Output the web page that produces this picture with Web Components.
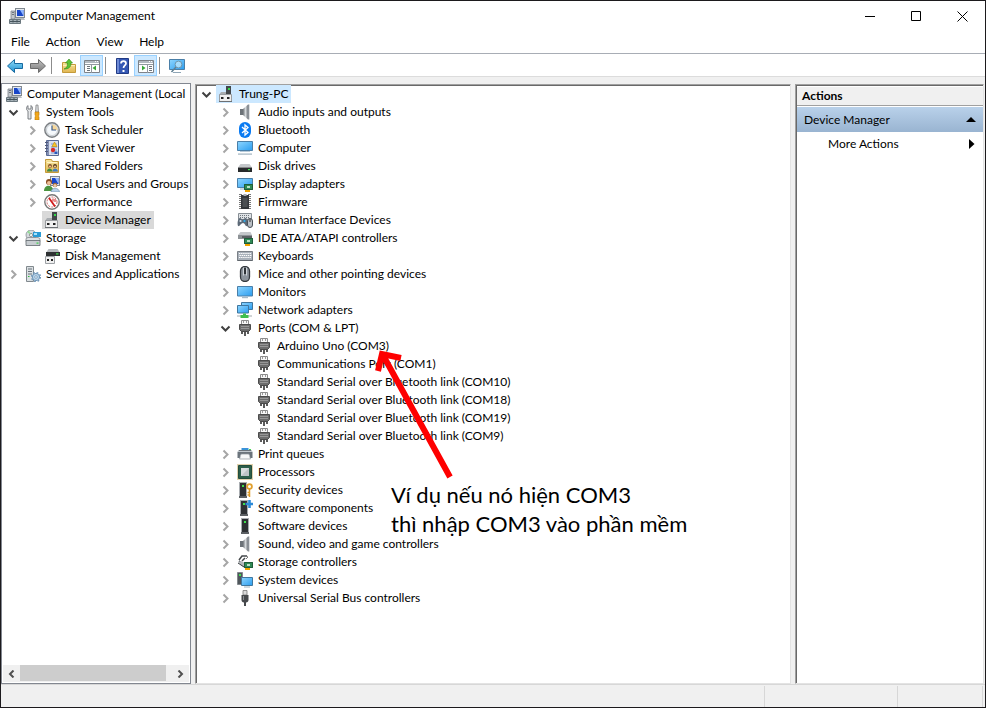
<!DOCTYPE html>
<html lang="en">
<head>
<meta charset="utf-8">
<title>Computer Management</title>
<style>
html, body { margin: 0; height: 100%; }
body { font: 12px/18px Lato, "Open Sans", sans-serif; color: #000; background: #fff; }
</style>
</head>
<body>
<mmc-window>
  <mmc-titlebar slot="top" icon="mgmt">Computer Management</mmc-titlebar>
  <mmc-menubar slot="top" items="File,Action,View,Help"></mmc-menubar>
  <mmc-toolbar slot="top"></mmc-toolbar>

  <mmc-pane slot="left" kind="thin" scrollbar>
    <tree-item icon="mgmt" depth="0">Computer Management (Local</tree-item>
    <tree-item icon="tools" depth="0" state="open">System Tools</tree-item>
    <tree-item icon="clock" depth="1" state="closed">Task Scheduler</tree-item>
    <tree-item icon="event" depth="1" state="closed">Event Viewer</tree-item>
    <tree-item icon="shared" depth="1" state="closed">Shared Folders</tree-item>
    <tree-item icon="users" depth="1" state="closed">Local Users and Groups</tree-item>
    <tree-item icon="perf" depth="1" state="closed">Performance</tree-item>
    <tree-item icon="device" depth="1" state="leaf" selected="grey">Device Manager</tree-item>
    <tree-item icon="storage" depth="0" state="open">Storage</tree-item>
    <tree-item icon="disk" depth="1" state="leaf">Disk Management</tree-item>
    <tree-item icon="services" depth="0" state="closed">Services and Applications</tree-item>
  </mmc-pane>

  <mmc-pane slot="middle" kind="sunken">
    <tree-item icon="device" depth="0" state="open" selected="blue">Trung-PC</tree-item>
    <tree-item icon="speaker" depth="1" state="closed">Audio inputs and outputs</tree-item>
    <tree-item icon="bluetooth" depth="1" state="closed">Bluetooth</tree-item>
    <tree-item icon="computer" depth="1" state="closed">Computer</tree-item>
    <tree-item icon="drive" depth="1" state="closed">Disk drives</tree-item>
    <tree-item icon="display" depth="1" state="closed">Display adapters</tree-item>
    <tree-item icon="firmware" depth="1" state="closed">Firmware</tree-item>
    <tree-item icon="hid" depth="1" state="closed">Human Interface Devices</tree-item>
    <tree-item icon="ide" depth="1" state="closed">IDE ATA/ATAPI controllers</tree-item>
    <tree-item icon="keyboard" depth="1" state="closed">Keyboards</tree-item>
    <tree-item icon="mouse" depth="1" state="closed">Mice and other pointing devices</tree-item>
    <tree-item icon="monitor" depth="1" state="closed">Monitors</tree-item>
    <tree-item icon="network" depth="1" state="closed">Network adapters</tree-item>
    <tree-item icon="port" depth="1" state="open">Ports (COM &amp; LPT)</tree-item>
    <tree-item icon="port" depth="2" state="leaf">Arduino Uno (COM3)</tree-item>
    <tree-item icon="port" depth="2" state="leaf">Communications Port (COM1)</tree-item>
    <tree-item icon="port" depth="2" state="leaf">Standard Serial over Bluetooth link (COM10)</tree-item>
    <tree-item icon="port" depth="2" state="leaf">Standard Serial over Bluetooth link (COM18)</tree-item>
    <tree-item icon="port" depth="2" state="leaf">Standard Serial over Bluetooth link (COM19)</tree-item>
    <tree-item icon="port" depth="2" state="leaf">Standard Serial over Bluetooth link (COM9)</tree-item>
    <tree-item icon="printer" depth="1" state="closed">Print queues</tree-item>
    <tree-item icon="cpu" depth="1" state="closed">Processors</tree-item>
    <tree-item icon="security" depth="1" state="closed">Security devices</tree-item>
    <tree-item icon="softcomp" depth="1" state="closed">Software components</tree-item>
    <tree-item icon="softdev" depth="1" state="closed">Software devices</tree-item>
    <tree-item icon="speaker" depth="1" state="closed">Sound, video and game controllers</tree-item>
    <tree-item icon="storctl" depth="1" state="closed">Storage controllers</tree-item>
    <tree-item icon="system" depth="1" state="closed">System devices</tree-item>
    <tree-item icon="usb" depth="1" state="closed">Universal Serial Bus controllers</tree-item>
    <arrow-note slot="overlay" lang="vi"><div>Ví dụ nếu nó hiện COM3</div><div>thì nhập COM3 vào phần mềm</div></arrow-note>
  </mmc-pane>

  <mmc-actions slot="right">
    <span slot="title">Actions</span>
    <span slot="group">Device Manager</span>
    <span slot="item">More Actions</span>
  </mmc-actions>

  <mmc-statusbar slot="bottom"></mmc-statusbar>
</mmc-window>

<script>
const defs = `<defs>
<linearGradient id="scr" x1="0" y1="0" x2="1" y2="1"><stop offset="0" stop-color="#8fd6ff"/><stop offset="1" stop-color="#2a9df0"/></linearGradient>
<linearGradient id="met" x1="0" y1="0" x2="1" y2="0"><stop offset="0" stop-color="#6d7277"/><stop offset=".5" stop-color="#d4d8db"/><stop offset="1" stop-color="#777c82"/></linearGradient>
<linearGradient id="fold" x1="0" y1="0" x2="0" y2="1"><stop offset="0" stop-color="#f7e6a0"/><stop offset="1" stop-color="#e0b550"/></linearGradient>
<linearGradient id="blu" x1="0" y1="0" x2="0" y2="1"><stop offset="0" stop-color="#8fdcf8"/><stop offset="1" stop-color="#1e8fd0"/></linearGradient>
<linearGradient id="gry" x1="0" y1="0" x2="0" y2="1"><stop offset="0" stop-color="#c4c4c4"/><stop offset="1" stop-color="#777"/></linearGradient>
</defs>`;
const board = `<path d="M7 8h9v6H7z" fill="#2f8a55"/><path d="M7.500 8.500h8v5h-8z" fill="none" stroke="#1f5c3a"/><path d="M10 10h3v2h-3z" fill="#b9e3c6"/><path d="M8 14h5v2H8z" fill="#f0a400"/>`;
const tower = `<path d="M4 0h8v15H4z" fill="#a9adb1"/><path d="M5 1h6v13H5z" fill="#2e3134"/><path d="M7 3h2v2H7z" fill="#3fe04c"/><path d="M4 14h8v2H4z" fill="#5c6064"/>`;
const pcb = `<rect x="6.500" y=".5" width="9" height="9" fill="#e5e8ec" stroke="#808890"/><path d="M8 2h6.500v6H8z" fill="#1846c8"/><path d="M11 2h3.500v6z" fill="#8fb6ff"/>`;
const ICONS = {
mgmt: pcb + `<path d="M2 3h4v8H2z" fill="#c2c7cc" stroke="#7c8288" stroke-width=".8"/><path d="M3 4.500h2M3 6.500h2" stroke="#59616a" stroke-width=".8"/><path d="M6 10h9l1 2H6z" fill="#b8bdc2"/><path d="M.5 11.500h11v4H.5z" fill="#a9b4ba" stroke="#6a777e"/><path d="M1 13.500h10M4 12v2.500M8 12v2.500" stroke="#46545d"/>`,
tools: `<path d="M3 1.500C1 3 1 6 3 7v8h3V7c2-1 2-4 0-5.500v3.500H3z" fill="#e6e8ea" stroke="#707478" stroke-width=".9"/><path d="M11 1h2l.5 7h-3z" fill="#d5d8db" stroke="#7c7c7c" stroke-width=".7"/><path d="M10 8h4v3l-.6 1 .6 1v3h-4v-3l.6-1-.6-1z" fill="#f3a81c" stroke="#b97508" stroke-width=".6"/>`,
clock: `<circle cx="8" cy="8" r="7.200" fill="#dfe4e7" stroke="#7b7f83" stroke-width="1.400"/><circle cx="8" cy="8" r="5.500" fill="#f5f9fc" stroke="#b5bbc0" stroke-width=".6"/><path d="M8 8V2.500A5.500 5.500 0 0 1 13.500 8z" fill="#f6d79a"/><path d="M8 3.500V8h4" fill="none" stroke="#3c5c8c" stroke-width="1.200"/>`,
event: `<path d="M2.500.5h12v15h-12z" fill="#d9dfee" stroke="#5a6b95"/><path d="M3 1h2v14H3z" fill="#8490b4"/><path d="M1 2.500h3M1 5.500h3M1 8.500h3M1 11.500h3" stroke="#50597a"/><path d="M7 4h6M7 7h6M7 10h6M7 13h6" stroke="#7b9bd6"/><path d="M10.500 2l2.500 4.500H8z" fill="#f8c62a" stroke="#c08a00" stroke-width=".6"/><circle cx="9" cy="10" r="2.200" fill="#d62a2a"/><path d="M10.500 11.500h3V14h-3z" fill="#2a58b8"/>`,
shared: `<path d="M1.500 3.500v-2h6l1 2h6v11h-13z" fill="url(#fold)" stroke="#c49a3a"/><path d="M3 4.500h10" stroke="#fff5c8"/><circle cx="6" cy="8" r="1.900" fill="#7b4a22"/><circle cx="11" cy="8" r="1.900" fill="#4e3318"/><path d="M3 13.500c0-4 5-4 5.500 0z" fill="#3f8a42"/><path d="M8.500 13.500c0-4 5-4 5.500 0z" fill="#3f7fc2"/><circle cx="6" cy="8.600" r="1.100" fill="#eebf94"/><circle cx="11" cy="8.600" r="1.100" fill="#eebf94"/>`,
users: pcb + `<circle cx="5" cy="6" r="3" fill="#8a4c22"/><circle cx="5" cy="7" r="2" fill="#efc09a"/><path d="M0 15c0-7 9-7 9.500 0z" fill="#4c9440"/><circle cx="11" cy="9" r="2.300" fill="#9a6a40"/><circle cx="11" cy="9.500" r="1.600" fill="#efc9a8"/><path d="M7 16c0-5 8-5 8.500 0z" fill="#b5d0e8" stroke="#6b8ba5" stroke-width=".6"/>`,
perf: `<circle cx="8" cy="8" r="7.200" fill="#fff" stroke="#777" stroke-width="1.400"/><circle cx="8" cy="8" r="5" fill="#fff" stroke="#c66" stroke-width="1" stroke-dasharray="2 1.200"/><path d="M5 4l6 8.500" stroke="#d01c1c" stroke-width="1.800"/><path d="M9 4.500v3M11 5v3" stroke="#d01c1c"/>`,
device: `<path d="M8 0h5v9H8z" fill="#43474a"/><path d="M10 2h2v2h-2z" fill="#35d94b"/><path d="M3 6h5v2h5v1H1z" fill="#a9adb1"/><path d="M1.500 8.500h12v7h-12z" fill="#f0f0f0" stroke="#9a9da0"/><path d="M1 15.500h13" stroke="#6c7074"/><path d="M3 11h2.500v2H3zM9 11h2.500v2H9z" fill="#222"/>`,
storage: `<circle cx="6" cy="5" r="5" fill="#d5dade" stroke="#888e94" stroke-width=".8"/><circle cx="6" cy="5" r="1.600" fill="#fff" stroke="#777" stroke-width=".7"/><path d="M6 5L2 2l2-1.500z" fill="#8fdc92"/><path d="M8 2h8v5H8z" fill="#2b9bd4"/><path d="M9 3h3v2H9z" fill="#a7e1fb"/><path d="M1 8.500l2-1h10l2 1v3H1z" fill="#dfe2e4" stroke="#777d82" stroke-width=".7"/><path d="M1 10.500h14v5H1z" fill="#c8cdd1" stroke="#60676c" stroke-width=".8"/><path d="M11.500 12.500h2v1.200h-2z" fill="#3bd14a"/>`,
disk: `<path d="M2.500 4l2-3h9l2 3z" fill="#b6babe"/><path d="M2 4h14v4H2z" fill="#2e3133"/><path d="M12 5.300h2.500v1.200H12z" fill="#44e052"/><path d="M1.500 8.500h9v7h-9z" fill="#f0f0f0" stroke="#9da1a5"/><path d="M3 11h2v2H3zM7 11h2v2H7z" fill="#222"/>`,
services: `<path d="M1.500.5h7v15h-7z" fill="#dbe0e3" stroke="#81898e"/><path d="M3 3h4M3 5.500h4M3 8h4" stroke="#69737b"/><path d="M3 10.500h1.500" stroke="#2bb83b"/><circle cx="11" cy="11" r="3.600" fill="#b8d4ea" stroke="#6f95b7"/><circle cx="11" cy="11" r="4.500" fill="none" stroke="#6f95b7" stroke-width="1.300" stroke-dasharray="1.700 1.840"/><circle cx="11" cy="11" r="1.300" fill="#fff" stroke="#6f95b7" stroke-width=".8"/>`,
speaker: `<path d="M3 5h3v6H3z" fill="#6c7278"/><path d="M6 5l5-4.500v15L6 11z" fill="url(#met)"/><path d="M11 .5h1.300v15H11z" fill="#8a9097"/>`,
bluetooth: `<rect x="2" y="0" width="12" height="16" rx="6" fill="#0a7bf2"/><path d="M5 5l6 5.500L8 13V3l3 2.500L5 11" fill="none" stroke="#fff" stroke-width="1.300"/>`,
computer: `<path d="M.5 1.500h15v9H.5z" fill="url(#scr)" stroke="#4a7fa8"/><path d="M3 11h10v1H3z" fill="#b7cad8"/><path d="M1 13.500h14v1.200H1z" fill="#9fb2bf"/>`,
drive: `<path d="M3.500 6h9L15 9.500H1z" fill="#c4c7ca"/><path d="M1 9.500h14V14H1z" fill="#26292b"/><path d="M11 11h2v1.300h-2z" fill="#3fe050"/>`,
display: `<path d="M.5 2.500h15v9H.5z" fill="url(#scr)" stroke="#4a7fa8"/><path d="M3 12.500h5v1H3z" fill="#9fb2bf"/>${board}`,
firmware: `<path d="M3.500 0v16M12.500 0v16" stroke="#777" stroke-dasharray="1 1" stroke-width="3"/><path d="M4 1h8v14H4z" fill="#34373a"/><path d="M6.500 0h3v2h-3z" fill="#a9adb0"/><path d="M5.500 4h5v9h-5z" fill="#4b4f52"/>`,
hid: `<path d="M1.500 1.500h13v6h-13z" fill="#dfe3e6" stroke="#878e94"/><path d="M3 3.500h10M3 5.500h10" stroke="#6e767d" stroke-dasharray="1 1"/><path d="M1 14c-1-3 0-8 2-8 1.500 0 1 1.500 2.500 1.500S7 6 8.500 6c2 0 2.500 5 1.500 8-1.500 1-2-3-4-3s-3.500 4-5 3z" fill="#5d6a78"/><circle cx="3.500" cy="9" r="1.100" fill="#d7e6f2"/><circle cx="7.500" cy="9" r="1.100" fill="#2db0ef"/><rect x="10.500" y="6.500" width="5" height="9" rx="2.500" fill="#b9bfc5" stroke="#4a5158"/><path d="M13 7v3" stroke="#333"/>`,
ide: `<path d="M3.500 2h10L15 5H1z" fill="#c4c7ca"/><path d="M1 5h14v4H1z" fill="#8e9397"/>${board}<path d="M5 7h10" stroke="#2a2d30"/>`,
keyboard: `<path d="M.5 3.500h15v9H.5z" fill="#a9b1ba" stroke="#7a8087"/><path d="M2 5.500h12M2.500 7.500h12" stroke="#fff" stroke-dasharray="1.400 .7"/><path d="M2 9.500h12" stroke="#fff" stroke-dasharray="1.400 .7"/><path d="M.5 12.500h15" stroke="#60666d"/>`,
mouse: `<rect x="3.500" y=".5" width="9" height="15" rx="4.500" fill="#8c949c" stroke="#34393e" stroke-width="1.300"/><path d="M6.500 1.500v8M9.500 1.500v8" stroke="#cfd5da"/><path d="M8 2v6" stroke="#24282c" stroke-width="1.800"/>`,
monitor: `<path d="M.5 2.500h15v9.500H.5z" fill="url(#scr)" stroke="#4a7fa8"/><path d="M5 13h6v1.200H5z" fill="#a7bac7"/>`,
network: `<path d="M4.500.5h11v7h-11z" fill="url(#scr)" stroke="#3f779f"/><path d="M.5 3.500h11v7.500H.5z" fill="url(#scr)" stroke="#3f779f"/><path d="M0 13h15v2H0z" fill="#d0d4d6"/><path d="M6 11.500h3v1.500h2.500v3h-8v-3H6z" fill="#3fbf4e"/>`,
port: `<path d="M4.500.5h7v4h-7z" fill="#f7f7f7" stroke="#8c8c8c"/><path d="M6.500 1v2M9.500 1v2" stroke="#9a9a9a"/><path d="M2.500 4.500h11v5l-2 2h-7l-2-2z" fill="#6c6c6c" stroke="#4c4c4c"/><path d="M4 6.500h8M4 8.500h8" stroke="#a2a2a2" stroke-width=".8"/><path d="M5 11v3M11 11v3M8 11v5" stroke="#4a4a4a" stroke-width="1.800"/>`,
printer: `<path d="M4.500 2h7v2h-7z" fill="#3a93d8"/><path d="M2 4h12l1.500 2v6H13V9H3v3H.5V6z" fill="#6b747c"/><path d="M1 5.500h14" stroke="#bfc7cd"/><path d="M4 8h8l1.500 5h-11z" fill="#f6f8f9" stroke="#8c959c" stroke-width=".7"/><path d="M12 3h2v1h-2z" fill="#44d455"/>`,
cpu: `<path d="M.5.500h15v15H.5z" fill="none" stroke="#c2a55a" stroke-dasharray="1 1"/><path d="M1.500 1.500h13v13h-13z" fill="#2d5f4a" stroke="#244c3c"/><path d="M4 4h8v8H4z" fill="#d9dcdd"/><path d="M12 4v8H4z" fill="#bfc4c6"/>`,
security: `<g transform="translate(-2)">${tower}</g><circle cx="12.500" cy="4.500" r="2.400" fill="none" stroke="#e0a030" stroke-width="1.800"/><path d="M12.500 7v8M12.500 10.500h-2M12.500 13h-2" stroke="#dd9a28" stroke-width="1.500"/>`,
softcomp: `<g transform="translate(-1)">${tower}</g><path d="M12.500 0v8M8.500 4h8" stroke="#2c8ad8" stroke-width="2.600"/>`,
softdev: tower,
storctl: `<path d="M2 6l3-4h5M5 7l3-3M2 7l4 3" fill="none" stroke="#44484b" stroke-width="1.500"/><path d="M9 2l2 1-2 2" fill="none" stroke="#777" stroke-width="1"/><path d="M1 8l5 5h2V9L4 7z" fill="#b4b8bc"/><path d="M1 9l6 4" stroke="#373b3e"/>${board}`,
system: `<path d="M.5.500h5v12h-5z" fill="#50565b" stroke="#83898e"/><path d="M2 2h2v2H2z" fill="#41df51"/><path d="M4.500 5.500h11v8h-11z" fill="url(#scr)" stroke="#3f779f"/><path d="M7 14.500h6v1H7z" fill="#9fb2bf"/>`,
usb: `<path d="M6 .5h4V5H6z" fill="#dadada" stroke="#777" stroke-width=".8"/><path d="M4.500 5h7v5c0 1.500-1 2.500-2.500 2.500V16H7v-3.500c-1.500 0-2.500-1-2.500-2.500z" fill="#46494c"/><path d="M6.500 6v4" stroke="#8b8f93"/>`,
back: `<path d="M7.500 1.500v4h8v5h-8v4L.5 8z" fill="url(#blu)" stroke="#17699f" stroke-linejoin="round"/>`,
forward: `<path d="M8.500 1.500v4h-8v5h8v4l7-6.500z" fill="url(#gry)" stroke="#6c6c6c" stroke-linejoin="round"/>`,
upfolder: `<path d="M1.500 14.500v-10h5l1 2h7v8z" fill="url(#fold)" stroke="#c49a3a"/><path d="M2 7.500h12" stroke="#fff0b8"/><path d="M3 11c3-1 3.500-3 3.500-6h-2l3.500-4 3.500 4H10c0 4-2 6-7 6z" fill="#5cc436" stroke="#2f8a1a" stroke-width=".6"/>`,
paneleft: `<path d="M.5 2.500h15v12H.5z" fill="#fff" stroke="#7d8288"/><path d="M1 3h14v2H1z" fill="#b3bac1"/><path d="M11 3.500h1M13 3.500h1" stroke="#fff"/><path d="M7.500 6v9M1 6.500h14" stroke="#9299a0"/><path d="M3 8.500h3M3 10.500h3M3 12.500h3" stroke="#6d747b"/><path d="M12 7.500v5L8.500 10z" fill="#38a838"/>`,
paneright: `<path d="M.5 2.500h15v12H.5z" fill="#fff" stroke="#7d8288"/><path d="M1 3h14v2H1z" fill="#b3bac1"/><path d="M11 3.500h1M13 3.500h1" stroke="#fff"/><path d="M9.500 6v9M1 6.500h14" stroke="#9299a0"/><path d="M11 8.500h3M11 10.500h3M11 12.500h3" stroke="#6d747b"/><path d="M4 7.500v5L7.500 10z" fill="#38a838"/>`,
help: `<path d="M1.500.5h12v15h-12z" fill="#3558b4" stroke="#203a85"/><path d="M2 1h2v14H2z" fill="#6e8ad4"/><path d="M6 5.500c0-3.200 5-3.200 5 0 0 2-2.500 2-2.500 4.500" fill="none" stroke="#fff" stroke-width="1.700"/><path d="M7.500 12h2v2h-2z" fill="#fff"/>`,
search: `<path d="M.5 1.500h15v10H.5z" fill="url(#scr)" stroke="#4a7fa8"/><path d="M4 14.500h8" stroke="#8fa6b6"/><circle cx="9.500" cy="6.500" r="3.400" fill="#c8ecff" fill-opacity=".7" stroke="#6f96ad"/><path d="M7 9l-4.500 5" stroke="#5f7f92" stroke-width="1.500"/>`
};

class Base extends HTMLElement {
  connectedCallback() {
    if (this.shadowRoot) return;
    this.attachShadow({ mode: 'open' }).innerHTML = this.render();
  }
  attr(name) { return this.getAttribute(name) || ''; }
}

customElements.define('mmc-icon', class extends Base {
  render() {
    return `<style>:host{display:block;flex:none;width:16px;height:16px}svg{display:block}</style>
    <svg width="16" height="16" viewBox="0 0 16 16" aria-hidden="true">${defs}${ICONS[this.attr('name')] || ''}</svg>`;
  }
});

customElements.define('mmc-window', class extends Base {
  render() {
    return `<style>
    :host{display:flex;flex-direction:column;box-sizing:border-box;min-height:100vh;border:1px solid #1c1a1d;background:#f0f0f0}
    main{flex:1;display:grid;grid-template-columns:190px minmax(0,1fr) 189px;column-gap:4px;padding:6px 1px 0 0}
    ::slotted([slot=left]),::slotted([slot=middle]),::slotted([slot=right]){min-width:0}
    ::slotted([slot=middle]),::slotted([slot=right]){margin-top:1px}
    </style>
    <slot name="top"></slot>
    <main><slot name="left"></slot><slot name="middle"></slot><slot name="right"></slot></main>
    <slot name="bottom"></slot>`;
  }
});

customElements.define('mmc-titlebar', class extends Base {
  render() {
    return `<style>
    :host{display:flex;align-items:center;height:30px;background:#fff;padding-left:8px}
    h1{flex:1;margin:0 0 0 5px;font:inherit}
    button{width:46px;height:30px;border:0;padding:0;background:none;display:grid;place-items:center}
    svg{fill:none;stroke:#000;display:block}
    </style>
    <mmc-icon name="${this.attr('icon')}"></mmc-icon><h1><slot></slot></h1>
    <button aria-label="Minimize"><svg width="11" height="11"><path d="M0 5.500h10"/></svg></button>
    <button aria-label="Maximize"><svg width="11" height="11"><path d="M.5.500h9v9h-9z"/></svg></button>
    <button aria-label="Close"><svg width="11" height="11"><path d="M.5.500l10 10M10.500.5l-10 10"/></svg></button>`;
  }
});

customElements.define('mmc-menubar', class extends Base {
  render() {
    return `<style>
    :host{display:flex;height:22px;padding-left:2px;background:#fff;border-bottom:1px solid #a8adb5}
    button{border:0;background:none;color:inherit;font:inherit;padding:0 8px}
    </style>${this.attr('items').split(',').map(t => `<button>${t}</button>`).join('')}`;
  }
});

customElements.define('mmc-toolbar', class extends Base {
  render() {
    const b = (icon, label, on) => `<button aria-label="${label}" class="${on ? 'on' : ''}"><mmc-icon name="${icon}"></mmc-icon></button>`;
    return `<style>
    :host{display:flex;height:21px;padding:1px 0 0 2px;background:#fff;border-bottom:1px solid #dcdcdc}
    button{width:23px;height:21px;padding:1px 0 0;border:1px solid transparent;background:none;display:grid;place-items:center}
    .on{background:#cce8ff;border-color:#99d1ff}
    i{width:1px;margin:2px 5px 2px 2px;background:#8c8c8c}
    </style>${b('back','Back')}${b('forward','Forward')}<i></i>${b('upfolder','Up one level')}${b('paneleft','Show console tree',1)}<i></i>${b('help','Help')}${b('paneright','Show action pane',1)}<i></i>${b('search','Scan for hardware changes')}`;
  }
});

customElements.define('mmc-pane', class extends Base {
  render() {
    const bar = this.hasAttribute('scrollbar') ? `<div class="bar"><button aria-label="Scroll left"><svg width="7" height="8"><path d="M5.500.500L2 4l3.500 3.500"/></svg></button><span></span><button aria-label="Scroll right"><svg width="7" height="8"><path d="M1.500.500L5 4 1.500 7.500"/></svg></button></div>` : '';
    return `<style>
    :host{display:flex;flex-direction:column;position:relative;box-sizing:border-box;background:#fff;overflow:hidden}
    :host([kind=thin]){border:1px solid #828790;padding:1px}
    :host([kind=thin]) .rows{padding-left:1px}
    :host([kind=sunken]){border:1px solid;border-color:#a0a0a0 #e3e3e3 #e3e3e3 #a0a0a0;box-shadow:inset 1px 1px #696969;padding:0 0 0 1px}
    .rows{flex:1}
    .bar{display:flex;height:17px;background:#f0f0f0}
    .bar button{width:17px;padding:0;border:0;background:none;display:grid;place-items:center}
    .bar span{width:146px;background:#cdcdcd;margin-bottom:1px}
    .bar button:last-child{margin-left:auto}
    .bar svg{fill:none;stroke:#505050;stroke-width:2}
    </style><div class="rows"><slot></slot></div>${bar}<slot name="overlay"></slot>`;
  }
});

customElements.define('tree-item', class extends Base {
  render() {
    const s = this.attr('state');
    const path = s === 'open' ? 'M1.500 3.500L5.500 7.500l4-4' : 'M3.500 1.500l4 4-4 4';
    const col = s ? `<span class="col">${s === 'leaf' ? '' : `<button class="${s}" aria-label="Toggle" aria-expanded="${s === 'open'}"><svg width="11" height="11"><path d="${path}"/></svg></button>`}</span>` : '';
    return `<style>
    :host{display:flex;height:18px;white-space:nowrap;padding-left:calc(19px * ${Number(this.attr('depth'))})}
    .col{flex:none;width:19px;display:grid;place-items:center}
    button{border:0;padding:1px 0 0;background:none;display:block}
    svg{display:block;fill:none;stroke:#a6a6a6;stroke-width:2}
    .open svg{stroke:#404040}
    .item{display:flex;align-items:center;gap:5px;padding:0 3px 0 2px}
    :host([selected=grey]) .item{background:#d9d9d9}
    :host([selected=blue]) .item{background:#cce8ff}
    </style>${col}<span class="item"><mmc-icon name="${this.attr('icon')}"></mmc-icon><span><slot></slot></span></span>`;
  }
});

customElements.define('arrow-note', class extends Base {
  render() {
    return `<style>
    :host{position:absolute;left:178px;top:265px;font:22px/29px Lato,"Open Sans",sans-serif;white-space:nowrap}
    svg{display:block}
    .text{padding-left:17px}
    </style>
    <svg width="80" height="130" fill="none" stroke="#fe0000" stroke-width="6"><path d="M76 127L10 7M4 21L8 4l19 4"/></svg>
    <div class="text"><slot></slot></div>`;
  }
});

customElements.define('mmc-actions', class extends Base {
  render() {
    return `<style>
    :host{display:block;box-sizing:border-box;background:#fff;border:1px solid;border-color:#a0a0a0 #e3e3e3 #e3e3e3 #a0a0a0;box-shadow:inset 1px 1px #696969;padding:2px 0 0 1px}
    h2{margin:0;padding:0 5px;font:inherit;font-weight:bold;background:#f0f0f0;border-bottom:1px solid #a0a0a0}
    button{display:flex;width:100%;align-items:center;justify-content:space-between;border:0;font:inherit;color:inherit;text-align:left;background:none;height:24px;padding:0 8px 0 31px}
    .group{margin-top:1px;height:25px;padding:0 7px;background:linear-gradient(#b9d1ea,#99b4d1)}
    </style>
    <h2><slot name="title"></slot></h2>
    <button class="group"><slot name="group"></slot><svg width="10" height="5"><path d="M0 5l5-5 5 5z"/></svg></button>
    <button><slot name="item"></slot><svg width="6" height="10"><path d="M0 0l5.500 5L0 10z"/></svg></button>`;
  }
});

customElements.define('mmc-statusbar', class extends Base {
  render() {
    return `<style>
    :host{display:grid;grid-template-columns:minmax(0,1fr) 132px 84px;column-gap:1px;height:21px;border-top:1px solid #d7d7d7;padding:1px 2px 0 0}
    span{border-right:1px solid #d7d7d7}
    </style><span></span><span></span><span></span>`;
  }
});
</script>
</body>
</html>
